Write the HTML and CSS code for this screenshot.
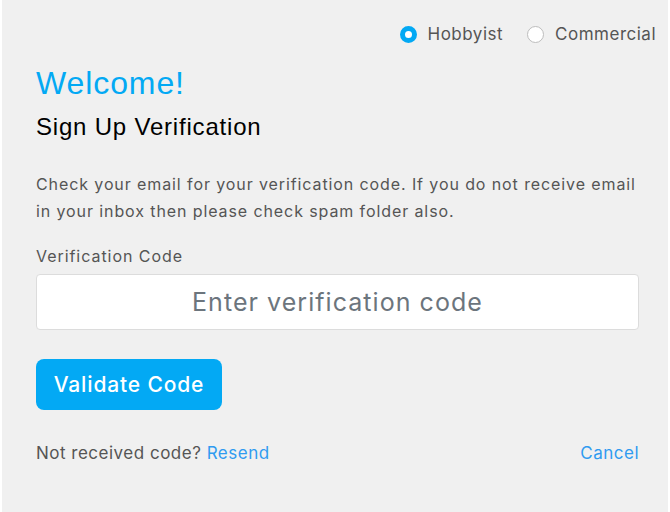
FILE: index.html
```html
<!DOCTYPE html>
<html>
<head>
<meta charset="utf-8">
<link rel="stylesheet" href="styles.css">
</head>
<body>
<div class="panel">
  <div class="plans">
    <label class="plan"><span class="radio checked"></span>Hobbyist</label>
    <label class="plan"><span class="radio"></span>Commercial</label>
  </div>
  <h1 class="welcome">Welcome!</h1>
  <h2 class="title">Sign Up Verification</h2>
  <p class="info">Check your email for your verification code. If you do not receive email in your inbox then please check spam folder also.</p>
  <div class="label">Verification Code</div>
  <input class="code" type="text" placeholder="Enter verification code">
  <button class="validate">Validate Code</button>
  <div class="footer">
    <span>Not received code? <a class="link">Resend</a></span>
    <a class="link">Cancel</a>
  </div>
</div>
</body>
</html>
```

FILE: styles.css
```css
html, body {
  margin: 0;
  padding: 0;
  background: #ffffff;
}
body {
  font-family: Inter, "Noto Sans", sans-serif;
}
.panel {
  margin-left: 2px;
  width: 666px;
  height: 512px;
  box-sizing: border-box;
  background: #f0f0f0;
  padding: 22px 29px 0 34px;
  display: flex;
  flex-direction: column;
}
.plans {
  display: flex;
  justify-content: flex-end;
  gap: 24px;
  margin-right: -17px;
  height: 24px;
}
.plan {
  display: flex;
  align-items: center;
  gap: 11px;
  font-size: 17px;
  line-height: 24px;
  letter-spacing: 0.5px;
  color: #555;
}
.radio {
  width: 17px;
  height: 17px;
  box-sizing: border-box;
  border-radius: 50%;
  border: 1px solid #bdbdbd;
  background: #fff;
}
.radio.checked {
  border: 5px solid #03a9f4;
  background: #fff;
}
.welcome {
  margin: 18px 0 0;
  font-family: "Liberation Sans", Arial, sans-serif;
  font-weight: 400;
  font-size: 32px;
  line-height: 38px;
  letter-spacing: 0.9px;
  color: #03a9f4;
}
.title {
  margin: 10px 0 0;
  font-family: "Liberation Sans", Arial, sans-serif;
  font-weight: 400;
  font-size: 24px;
  line-height: 30px;
  letter-spacing: 0.8px;
  color: #000;
}
.info {
  margin: 29px 0 0;
  font-size: 16px;
  line-height: 27px;
  letter-spacing: 0.9px;
  color: #555;
}
.label {
  margin-top: 19px;
  font-size: 16px;
  line-height: 24px;
  letter-spacing: 0.95px;
  color: #555;
}
.code {
  margin-top: 6px;
  height: 56px;
  box-sizing: border-box;
  border: 1px solid #dcdcdc;
  border-radius: 4px;
  background: #fff;
  font-family: Inter, "Noto Sans", sans-serif;
  font-size: 25px;
  letter-spacing: 1.05px;
  text-align: center;
  padding: 0 12px;
  outline: none;
}
.code::placeholder {
  color: #6c757d;
}
.validate {
  margin-top: 29px;
  align-self: flex-start;
  width: 186px;
  height: 51px;
  border: none;
  border-radius: 8px;
  background: #03a9f4;
  color: #fff;
  font-family: Inter, "Noto Sans", sans-serif;
  font-size: 21px;
  font-weight: 500;
  letter-spacing: 0.85px;
  padding: 0;
}
.footer {
  margin-top: 31px;
  display: flex;
  justify-content: space-between;
  font-size: 17px;
  line-height: 24px;
  letter-spacing: 0.5px;
  color: #555;
}
.link {
  color: #2f9bf0;
}
```
